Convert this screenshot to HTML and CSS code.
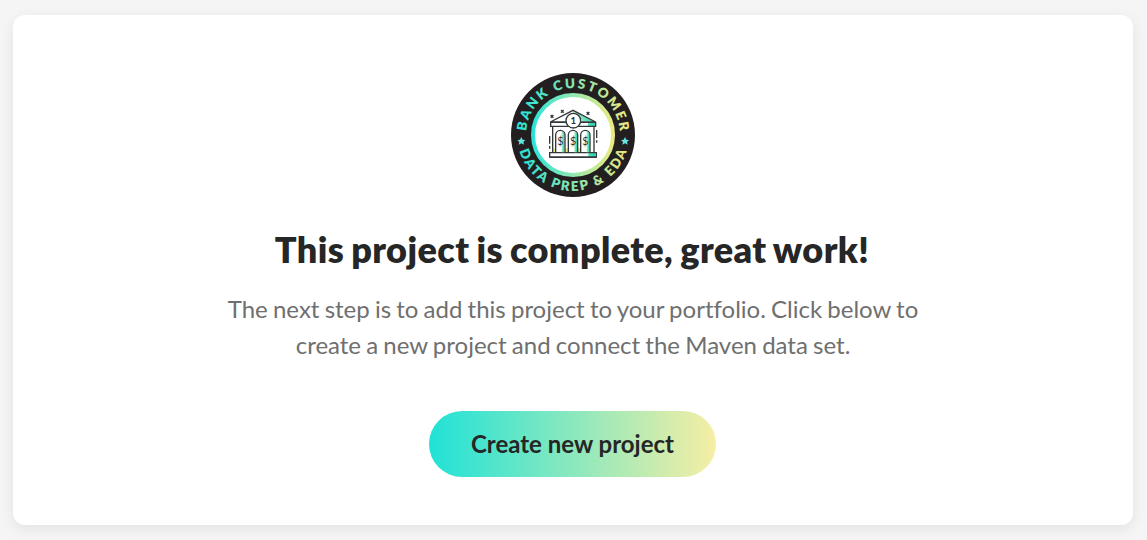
FILE: index.html
```html
<!DOCTYPE html>
<html lang="en">
<head>
<meta charset="utf-8">
<title>Project complete</title>
<link rel="stylesheet" href="styles.css">
</head>
<body>
<main class="card">
  <svg class="badge" viewBox="15 15 378 378" role="img" aria-label="Bank Customer Data Prep &amp; EDA">
    <defs>
      <linearGradient id="brand" gradientUnits="userSpaceOnUse" x1="80" y1="0" x2="330" y2="0">
        <stop offset="0" stop-color="#26e3da"/>
        <stop offset=".5" stop-color="#95e8ae"/>
        <stop offset="1" stop-color="#eeea7e"/>
      </linearGradient>
      <linearGradient id="letters" gradientUnits="userSpaceOnUse" x1="40" y1="0" x2="370" y2="0">
        <stop offset="0" stop-color="#26e3d8"/>
        <stop offset=".5" stop-color="#86e6b2"/>
        <stop offset="1" stop-color="#f0e67f"/>
      </linearGradient>
      <linearGradient id="glow" x1="0" y1="0" x2="1" y2="0">
        <stop offset="0" stop-color="#b5f0c8"/>
        <stop offset="1" stop-color="#22d6b4"/>
      </linearGradient>
      <path id="arc-top" d="M63 204A141 141 0 0 1 345 204"/>
      <path id="arc-bottom" d="M36 204A168 168 0 0 0 372 204"/>
      <path id="star" d="M0-12 4-4 12-3 6 3 8 11 0 7-8 11-6 3-12-3-4-4Z"/>
      <g id="bay">
        <path class="shade" d="M4-10Q12-7 12 2V54H4Z"/>
        <path class="line" d="M-14 54V2A14 14 0 0 1 14 2V54"/>
        <text class="dollar" x="0" y="31">$</text>
      </g>
      <path id="spark" class="line" d="M-4-4 4 4M4-4-4 4"/>
    </defs>
    <circle cx="204" cy="204" r="186" fill="#231f20"/>
    <circle cx="204" cy="204" r="120" fill="#fff" stroke="url(#brand)" stroke-width="12"/>
    <text class="ring-text"><textPath href="#arc-top" startOffset="50%" textLength="420">BANK CUSTOMER</textPath></text>
    <text class="ring-text"><textPath href="#arc-bottom" startOffset="50%" textLength="430">DATA PREP &amp; EDA</textPath></text>
    <use href="#star" x="49" y="222" fill="#65e5e0"/>
    <use href="#star" x="360" y="222" fill="#65e5e0"/>
    <path class="shade" d="M204 131 268 163H233Q224 143 204 139ZM249 168H271V178H249ZM250 258H271V270H250Z"/>
    <path fill="#e8ed83" d="M144 244H152V256H144ZM180 244H190V256H180ZM218 244H227V256H218Z"/>
    <path class="line" d="M136 165 204 130 272 165ZM137 166H272V178H137ZM143 178V256M267 178V256M134 257H274V270H134ZM134 271H275M134 207V230M134 237V245M275 189V213M275 220V227"/>
    <use href="#bay" x="166" y="202"/>
    <use href="#bay" x="204" y="202"/>
    <use href="#bay" x="241" y="202"/>
    <circle class="line coin" cx="205" cy="161" r="22"/>
    <text class="numeral" x="205" y="171">1</text>
    <use href="#spark" x="141" y="148"/>
    <use href="#spark" x="172" y="133"/>
    <use href="#spark" x="249" y="139"/>
  </svg>
  <h1 class="title">This project is complete, great work!</h1>
  <p class="message">The next step is to add this project to your portfolio. Click below to create a new project and connect the Maven data set.</p>
  <button class="create" type="button">Create new project</button>
</main>
</body>
</html>
```

FILE: styles.css
```css
* {
  box-sizing: border-box;
}

body {
  margin: 0;
  height: 540px;
  padding: 15px 14px 15px 13px;
  background: #f5f5f5;
  font-family: Lato, sans-serif;
  color: #262626;
  overflow: hidden;
}

.card {
  display: flex;
  flex-direction: column;
  align-items: center;
  height: 510px;
  padding-top: 57px;
  border-radius: 12px;
  background: #fff;
  box-shadow: 0 4px 14px rgba(0, 0, 0, .08);
}

.badge {
  display: block;
  width: 126px;
  height: 126px;
}

.title {
  margin: 29px 2px 0 0;
  font-size: 36px;
  font-weight: 800;
  line-height: 44px;
  letter-spacing: .39px;
  word-spacing: -1.6px;
  white-space: nowrap;
}

.message {
  width: 720px;
  margin: 20px 0 0;
  font-size: 24px;
  line-height: 36px;
  word-spacing: -.95px;
  font-variant-ligatures: none;
  text-align: center;
  color: #6f6f6f;
}

.create {
  width: 287px;
  height: 66px;
  margin: 48px 1px 0 0;
  padding: 0;
  border: 0;
  border-radius: 33px;
  background: linear-gradient(90deg, #20e2d7, #f6eea4);
  font: 700 24px/36px Lato, sans-serif;
  color: #262626;
}

.ring-text {
  font: 800 40px Lato, sans-serif;
  text-anchor: middle;
  fill: url(#letters);
}

.line {
  fill: none;
  stroke: #35383b;
  stroke-width: 4;
}

.coin {
  fill: #fff;
}

.shade {
  fill: url(#glow);
}

.dollar,
.numeral {
  text-anchor: middle;
  fill: #2e3133;
}

.dollar {
  font: 400 32px Lato, sans-serif;
}

.numeral {
  font: 700 29px Lato, sans-serif;
}
```
